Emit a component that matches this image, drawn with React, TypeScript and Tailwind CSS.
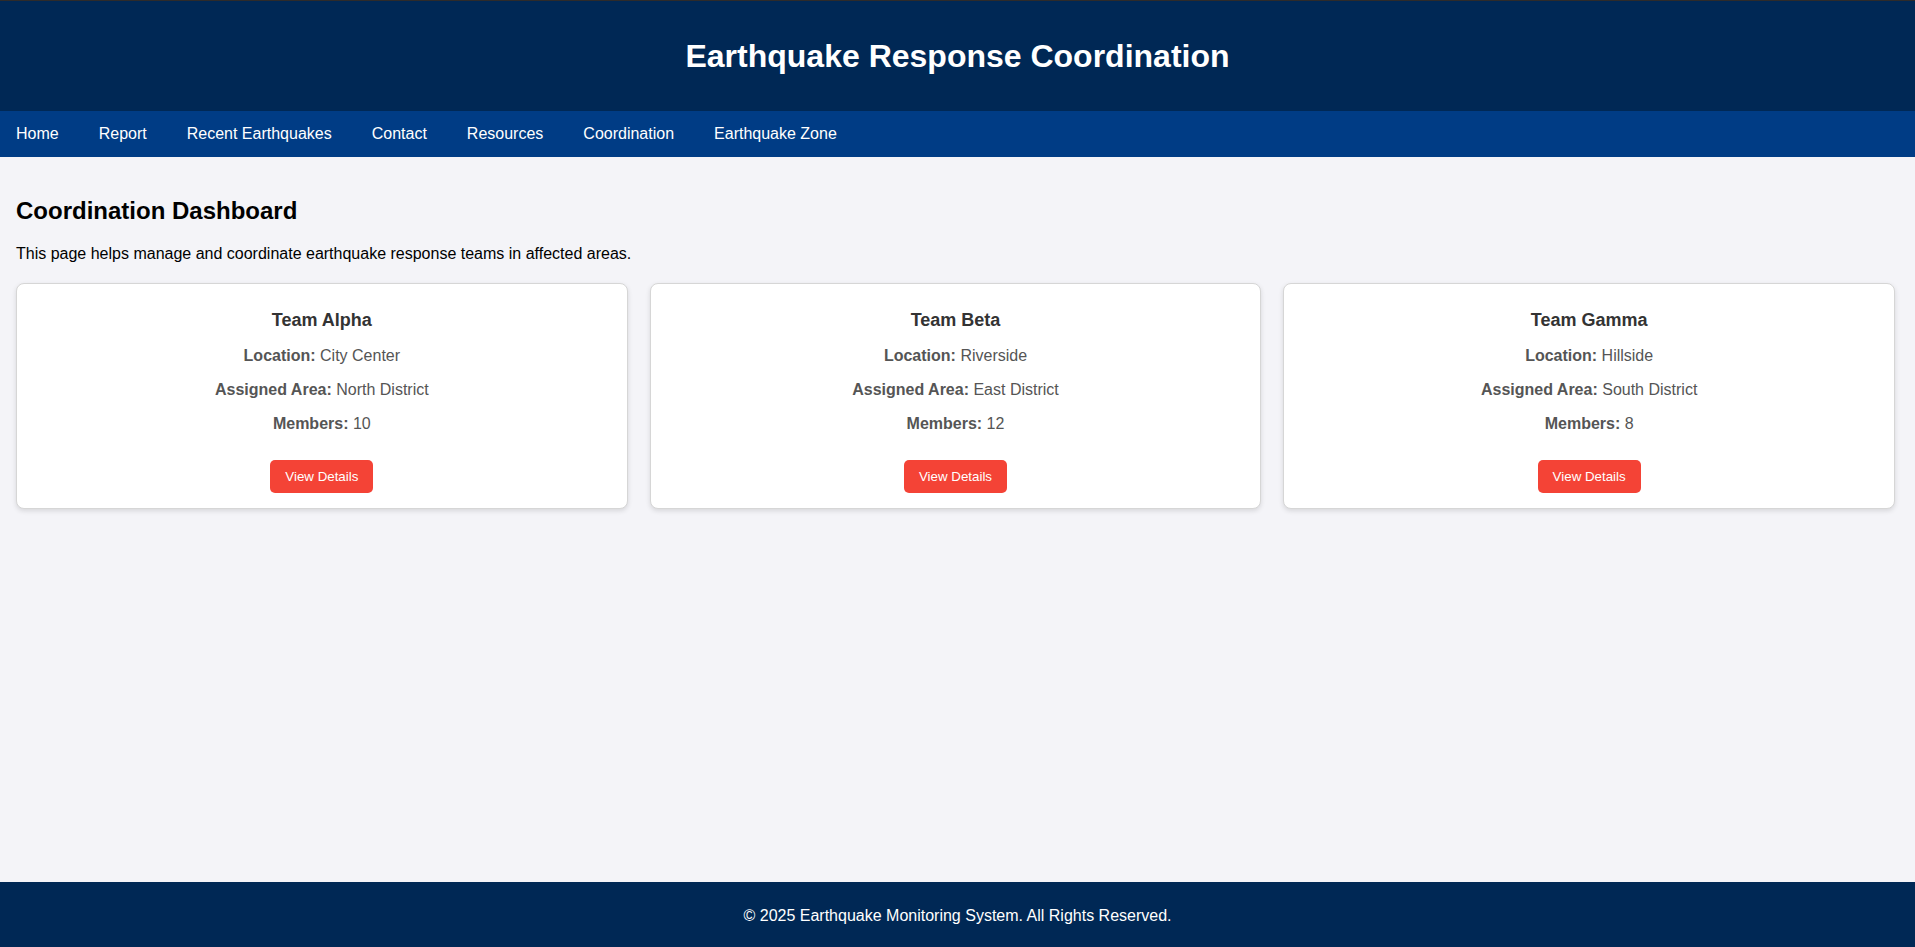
import React from 'react';

type Team = {
  name: string;
  location: string;
  area: string;
  members: number;
};

const teams: Team[] = [
  { name: 'Team Alpha', location: 'City Center', area: 'North District', members: 10 },
  { name: 'Team Beta', location: 'Riverside', area: 'East District', members: 12 },
  { name: 'Team Gamma', location: 'Hillside', area: 'South District', members: 8 },
];

const navLinks = [
  'Home',
  'Report',
  'Recent Earthquakes',
  'Contact',
  'Resources',
  'Coordination',
  'Earthquake Zone',
];

const TeamCard: React.FC<{ team: Team }> = ({ team }) => (
  <div className="flex flex-col items-center rounded-lg border border-[#d6d6d6] bg-white px-[15px] pb-[15px] pt-[15px] text-center shadow-[0_2px_5px_rgba(0,0,0,0.12)]">
    <h3 className="mt-[11px] text-[18px] font-bold leading-[1.15] text-[#333]">
      {team.name}
    </h3>
    <p className="mt-4 text-base leading-[1.15] text-[#555]">
      <strong className="font-bold">Location:</strong> {team.location}
    </p>
    <p className="mt-4 text-base leading-[1.15] text-[#555]">
      <strong className="font-bold">Assigned Area:</strong> {team.area}
    </p>
    <p className="mt-4 text-base leading-[1.15] text-[#555]">
      <strong className="font-bold">Members:</strong> {team.members}
    </p>
    <button
      type="button"
      className="mt-[26px] cursor-pointer rounded-[5px] bg-[#f44336] px-[15px] py-[9px] text-[13.333px] leading-[1.15] text-white"
    >
      View Details
    </button>
  </div>
);

const App: React.FC = () => {
  return (
    <div className="flex min-h-screen flex-col bg-[#f4f4f8] font-['Liberation_Sans',Arial,sans-serif] text-black">
      <header className="flex h-[111px] items-center justify-center border-t border-[#2e2b2a] bg-[#002855]">
        <h1 className="text-[32px] font-bold leading-[1.15] text-white">
          Earthquake Response Coordination
        </h1>
      </header>

      <nav className="flex h-[46px] items-center gap-[40px] bg-[#003c85] px-4">
        {navLinks.map(link => (
          <a key={link} href="#" className="text-base leading-[1.15] text-white no-underline">
            {link}
          </a>
        ))}
      </nav>

      <main className="flex-1 pb-10 pl-4 pr-5 pt-10">
        <h2 className="mb-5 text-[24px] font-bold leading-[1.15]">Coordination Dashboard</h2>
        <p className="mb-5 text-base leading-[1.15]">
          This page helps manage and coordinate earthquake response teams in affected areas.
        </p>
        <div className="grid grid-cols-3 gap-[22px]">
          {teams.map(team => (
            <TeamCard key={team.name} team={team} />
          ))}
        </div>
      </main>

      <footer className="flex h-[65px] items-center justify-center bg-[#002855] pt-[3px]">
        <p className="text-base leading-[1.15] text-white">
          © 2025 Earthquake Monitoring System. All Rights Reserved.
        </p>
      </footer>
    </div>
  );
};

export default App;
